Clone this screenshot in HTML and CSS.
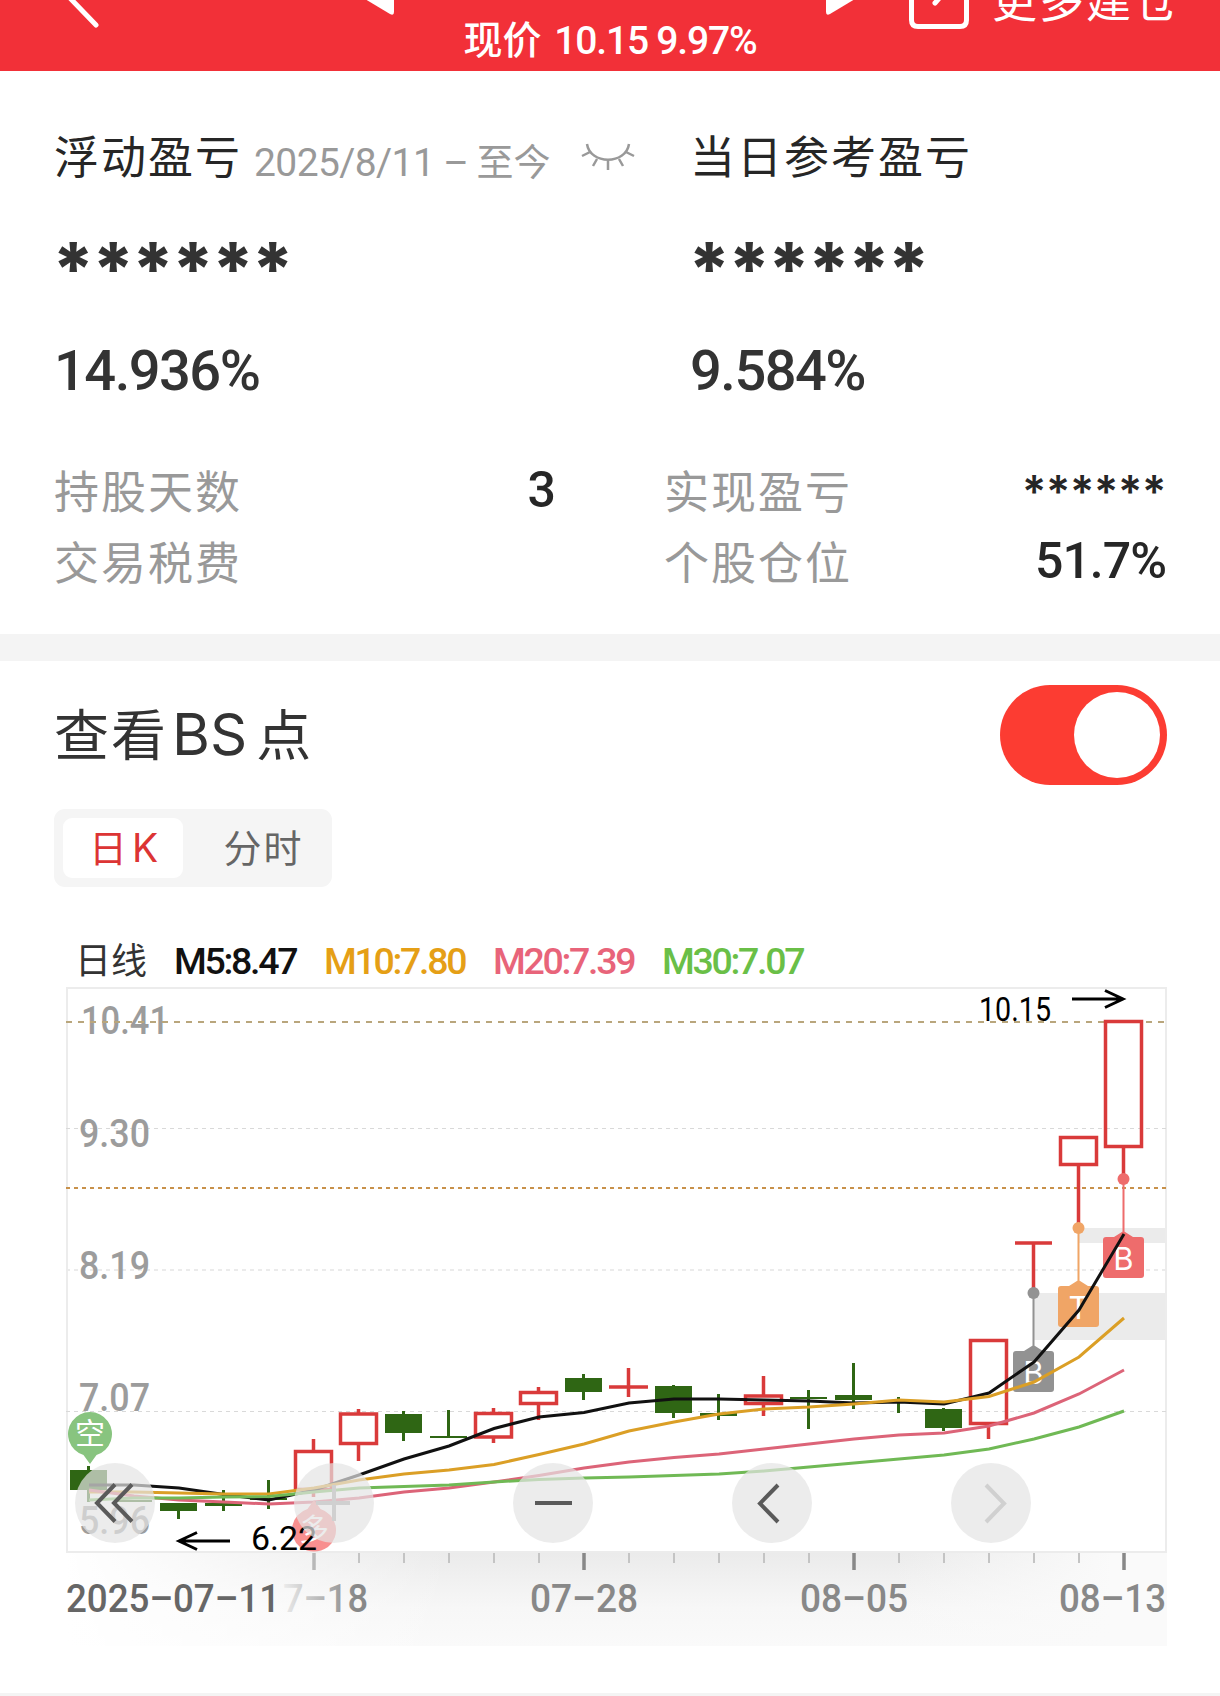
FILE: index.html
```html
<!DOCTYPE html>
<html lang="zh-CN">
<head>
  <meta charset="UTF-8">
  <meta name="viewport" content="width=device-width, initial-scale=1.0">
  <title>持仓详情</title>
  <link rel="stylesheet" href="styles.css">
</head>
<body>
  <header class="top-bar">
    <svg class="icon-back" width="50" height="32" viewBox="0 0 50 32">
      <path d="M16 -4L44 25" />
    </svg>
    <svg class="icon-prev" width="34" height="18" viewBox="0 0 34 18">
      <path d="M-2 -4H32V12Q32 16 28 14Z" />
    </svg>
    <p class="price">现价 <span class="num">10.15 9.97%</span></p>
    <svg class="icon-next" width="34" height="18" viewBox="0 0 34 18">
      <path d="M36 -4H2V12Q2 16 6 14Z" />
    </svg>
    <svg class="icon-more" width="62" height="32" viewBox="0 0 62 32">
      <path d="M3.500 -10V20Q3.500 26.500 10 26.500H52Q58.500 26.500 58.500 20V-10M34 -5L27 3" />
    </svg>
    <span class="more">更多建仓</span>
  </header>

  <section class="summary">
    <div class="profit">
      <div class="profit-col">
        <div class="profit-title">
          <span>浮动盈亏</span>
          <span class="period"><span class="num">2025/8/11 –</span> 至今</span>
          <svg class="icon-eye" width="54" height="28" viewBox="0 0 54 28">
            <path d="M6 1C9 22 45 22 48 1M9 9L1 13M45 9L53 13M16 16L12 23M38 16L42 23M27 17V27" />
          </svg>
        </div>
        <div class="stars">******</div>
        <div class="percent num">14.936%</div>
      </div>
      <div class="profit-col">
        <div class="profit-title"><span>当日参考盈亏</span></div>
        <div class="stars">******</div>
        <div class="percent num">9.584%</div>
      </div>
    </div>
    <div class="details">
      <div class="detail"><span>持股天数</span><b class="num">3</b></div>
      <div class="detail"><span>实现盈亏</span><b class="stars-small">******</b></div>
      <div class="detail"><span>交易税费</span></div>
      <div class="detail"><span>个股仓位</span><b class="num">51.7%</b></div>
    </div>
  </section>

  <section class="bs-panel">
    <div class="bs-header">
      <h2>查看<span class="latin">BS</span>点</h2>
      <span class="switch"><span class="knob"></span></span>
    </div>
    <div class="tabs">
      <span class="tab active">日<span class="latin">K</span></span>
      <span class="tab">分时</span>
    </div>

    <div class="legend">
      <span class="legend-name">日线</span>
      <span class="num m5">M5:8.47</span>
      <span class="num m10">M10:7.80</span>
      <span class="num m20">M20:7.39</span>
      <span class="num m30">M30:7.07</span>
    </div>

    <div class="chart">
      <svg width="1102" height="660" viewBox="66 987 1102 660">
        <defs>
          <linearGradient id="axis-v" x1="0" y1="0" x2="0" y2="1">
            <stop offset="0" stop-color="#ebebeb" />
            <stop offset="0.6" stop-color="#f7f7f7" />
            <stop offset="1" stop-color="#fafafa" />
          </linearGradient>
          <linearGradient id="axis-h" x1="0" y1="0" x2="1" y2="0">
            <stop offset="0" stop-color="#fff" />
            <stop offset="0.35" stop-color="#fff" stop-opacity="0" />
            <stop offset="0.75" stop-color="#fafafa" stop-opacity="0" />
            <stop offset="0.95" stop-color="#fafafa" />
          </linearGradient>
          <linearGradient id="date-fade" gradientUnits="userSpaceOnUse" x1="262" y1="0" x2="366" y2="0">
            <stop offset="0.15" stop-color="#f3f3f3" />
            <stop offset="0.9" stop-color="#888" />
          </linearGradient>
        </defs>

        <!-- time axis -->
        <rect x="66" y="1553" width="1101" height="93" fill="url(#axis-v)" />
        <rect x="66" y="1553" width="1101" height="93" fill="url(#axis-h)" />
        <path class="tick" d="M359 1553v10M404 1553v10M449 1553v10M494 1553v10M539 1553v10M629 1553v10M674 1553v10M719 1553v10M764 1553v10M809 1553v10M899 1553v10M944 1553v10M989 1553v10M1034 1553v10M1079 1553v10" />
        <path class="tick-major first" d="M314 1553v17" />
        <path class="tick-major" d="M584 1553v17M854 1553v17M1124 1553v17" />
        <text class="date" x="283" y="1612" textLength="85" lengthAdjust="spacingAndGlyphs" fill="url(#date-fade)">7–18</text>
        <text class="date start" x="66" y="1612" textLength="214" lengthAdjust="spacingAndGlyphs">2025–07–11</text>
        <text class="date" x="530" y="1612" textLength="108" lengthAdjust="spacingAndGlyphs">07–28</text>
        <text class="date" x="800" y="1612" textLength="108" lengthAdjust="spacingAndGlyphs">08–05</text>
        <text class="date" x="1059" y="1612" textLength="107" lengthAdjust="spacingAndGlyphs">08–13</text>

        <!-- gaps -->
        <path fill="#ebebeb" d="M1034 1293h133v47h-133zM1079 1228h88v15h-88z" />

        <!-- frame and grid -->
        <rect x="67" y="988" width="1099" height="564" fill="none" stroke="#ececec" stroke-width="2" />
        <path stroke="#d9d9d9" stroke-dasharray="4 4" d="M66 1128.500H1167M66 1411.500H1167" />
        <path stroke="#ebebeb" stroke-width="2" stroke-dasharray="4 4" d="M66 1270H1167" />
        <g class="scale">
          <text x="81" y="1034" textLength="88" lengthAdjust="spacingAndGlyphs">10.41</text>
          <text x="79" y="1147" textLength="71" lengthAdjust="spacingAndGlyphs">9.30</text>
          <text x="79" y="1279" textLength="71" lengthAdjust="spacingAndGlyphs">8.19</text>
          <text x="79" y="1411" textLength="71" lengthAdjust="spacingAndGlyphs">7.07</text>
          <text x="79" y="1534" textLength="71" lengthAdjust="spacingAndGlyphs">5.96</text>
        </g>
        <path stroke="#b9a67c" stroke-width="2" stroke-dasharray="6 6" d="M66 1022H1167" />
        <path stroke="#c8914a" stroke-width="2" stroke-dasharray="4 4" d="M66 1188H1167" />

        <!-- falling candles -->
        <path fill="#2f6614" d="M70 1470h37v20h-37zM115 1500h37v2h-37zM160 1503h37v8h-37zM205 1503h37v3h-37zM250 1498h37v2h-37zM385 1414h37v19h-37zM430 1436h37v2h-37zM565 1378h37v14h-37zM655 1386h37v27h-37zM700 1413h37v3h-37zM790 1397h37v2h-37zM835 1395h37v5h-37zM880 1401h37v2h-37zM925 1409h37v19h-37z" />
        <path stroke="#2f6614" stroke-width="3" d="M88.500 1466V1502M178.500 1503V1519M223.500 1490V1511M268.500 1480V1509M403.500 1411V1441M448.500 1410V1438M583.500 1374V1400M673.500 1385V1418M718.500 1394V1420M808.500 1390V1429M853.500 1363V1409M898.500 1397V1413M943.500 1408V1431" />

        <!-- rising candles -->
        <path class="rise" d="M295.500 1451.500h36v38h-36zM340.500 1414h36v29.500h-36zM475.500 1413.500h36v23.500h-36zM520.500 1392.500h36v11h-36zM745.500 1396h36v7.500h-36zM970.500 1340.500h36v83h-36zM1060.500 1137.500h36v27h-36zM1105.500 1021.500h36v125h-36z" />
        <path class="rise" d="M313.500 1439V1450M313.500 1491V1497M358.500 1409V1413M358.500 1445V1461M493.500 1408V1412M493.500 1438V1443M538.500 1387V1391M538.500 1405V1420M609 1387h39M628.500 1368V1397M763.500 1376V1395M763.500 1405V1416M988.500 1425V1439M1015 1243h37M1033.500 1243V1292M1078.500 1166V1228M1123.500 1148V1179" />

        <!-- trade points -->
        <g class="point hold">
          <circle cx="1033.500" cy="1293" r="6" />
          <path d="M1032.500 1293h2v53h-2zM1024 1351L1033.500 1345L1043 1351Z" />
          <rect x="1013" y="1351" width="41" height="41" rx="3" />
          <text x="1033.500" y="1384">B</text>
        </g>
        <g class="point trade">
          <circle cx="1078.500" cy="1228" r="6" />
          <path d="M1077.500 1228h2v53h-2zM1069 1286L1078.500 1280L1088 1286Z" />
          <rect x="1058" y="1286" width="41" height="41" rx="3" />
          <text x="1078.500" y="1319">T</text>
        </g>
        <g class="point buy">
          <circle cx="1123.500" cy="1179" r="6" />
          <path d="M1122.500 1179h2v53h-2zM1114 1237L1123.500 1231L1133 1237Z" />
          <rect x="1103" y="1237" width="41" height="41" rx="3" />
          <text x="1123.500" y="1270">B</text>
        </g>

        <!-- moving averages -->
        <g class="ma">
          <polyline stroke="#111" points="89,1485 134,1485 179,1488 224,1494.500 269,1500 314,1490 359,1475 404,1459 449,1446 494,1428.500 539,1417 584,1412.500 629,1403 674,1399 719,1399 764,1400 809,1401 854,1403 899,1402 944,1404 989,1393 1034,1362 1079,1310 1124,1234" />
          <polyline stroke="#db9f26" points="89,1492 134,1492 179,1493 224,1494 269,1494 314,1488 359,1480 404,1474 449,1470 494,1464.500 539,1454.500 584,1444 629,1431 674,1422 719,1414 764,1409 809,1407 854,1404 899,1400 944,1402 989,1396.500 1034,1382 1079,1357 1124,1318" />
          <polyline stroke="#dc6478" points="89,1490 134,1496 179,1500 224,1502 269,1504 314,1502 359,1498 404,1492 449,1488 494,1482 539,1475.500 584,1468 629,1462 674,1457.500 719,1454 764,1449 809,1444 854,1439 899,1435 944,1433 989,1426 1034,1413 1079,1394 1124,1370" />
          <polyline stroke="#70b955" points="89,1500 134,1498 179,1498 224,1497 269,1496.500 314,1492 359,1488 404,1486.500 449,1485 494,1482 539,1479.500 584,1478 629,1477 674,1475.500 719,1474 764,1471 809,1467 854,1463 899,1459 944,1455 989,1449 1034,1439 1079,1427 1124,1411" />
        </g>

        <!-- long / short balloons -->
        <g class="balloon">
          <path fill="#88c47f" d="M90 1464L83.500 1455A22 22 0 1 1 96.500 1455Z" />
          <text x="90" y="1444">空</text>
          <path fill="#f88f8f" d="M314 1500L307.500 1509A22 22 0 0 0 300 1547Q314 1556 328 1547A22 22 0 0 0 320.500 1509Z" />
          <text x="314" y="1540">多</text>
        </g>

        <!-- highest and lowest price -->
        <g class="extreme">
          <text x="979" y="1021" textLength="72" lengthAdjust="spacingAndGlyphs">10.15</text>
          <path d="M1072 999h51M1105 990.500L1123 999L1105 1007.500" />
          <text x="251" y="1550" textLength="66" lengthAdjust="spacingAndGlyphs">6.22</text>
          <path d="M230 1541h-51M197 1532.500L179 1541L197 1549.500" />
        </g>
      </svg>

      <div class="controls">
        <button type="button" class="control">
          <svg width="80" height="80"><path d="M80 21.500L62 40L80 58.500M97 21.500L79 40L97 58.500" transform="translate(-40)" /></svg>
        </button>
        <button type="button" class="control disabled">
          <svg width="80" height="80"><path d="M22 40H56M40 22V58" /></svg>
        </button>
        <button type="button" class="control">
          <svg width="80" height="80"><path d="M22 40H59" /></svg>
        </button>
        <button type="button" class="control">
          <svg width="80" height="80"><path d="M46 22L28 40.500L46 59" /></svg>
        </button>
        <button type="button" class="control disabled">
          <svg width="80" height="80"><path d="M35 22L53 40.500L35 59" /></svg>
        </button>
      </div>
    </div>
  </section>
</body>
</html>
```

FILE: styles.css
```css
* {
  box-sizing: border-box;
}

body {
  margin: 0;
  width: 1220px;
  height: 1696px;
  overflow: hidden;
  background-color: #fff;
  color: #262626;
  font-family: "Noto Sans CJK SC", sans-serif;
}

.num {
  font-family: Roboto, "Noto Sans CJK SC", sans-serif;
  font-weight: 500;
}

/* top bar */
.top-bar {
  display: flex;
  align-items: flex-start;
  height: 71px;
  background-color: #f23038;
  color: #fff;
}

.top-bar svg {
  flex: none;
}

.icon-back {
  margin-left: 52px;
}

.icon-back path,
.icon-more path {
  fill: none;
  stroke: #fff;
  stroke-width: 5;
  stroke-linecap: round;
}

.icon-prev {
  margin-left: 260px;
}

.icon-prev path,
.icon-next path {
  fill: #fff;
}

.price {
  width: 430px;
  margin: 12px 0 0 -1px;
  font-size: 39px;
  font-weight: 500;
  line-height: 50px;
  text-align: center;
  white-space: nowrap;
}

.price .num {
  margin-left: 4px;
  letter-spacing: -1.2px;
}

.icon-next {
  margin-left: -1px;
}

.icon-more {
  margin-left: 50px;
}

.more {
  margin: -26px 0 0 22px;
  font-size: 45px;
  line-height: 50px;
  letter-spacing: 2px;
  white-space: nowrap;
}

/* profit summary */
.summary {
  height: 590px;
  padding: 48px 54px 0;
  border-bottom: 27px solid #f4f4f4;
}

.profit {
  display: grid;
  grid-template-columns: 636px 1fr;
}

.profit-title {
  display: flex;
  align-items: center;
  height: 70px;
  font-size: 45px;
  letter-spacing: 2px;
  white-space: nowrap;
}

.period {
  margin: 12px 0 0 12px;
  color: #999;
  font-size: 37px;
  letter-spacing: 0;
}

.period .num {
  font-size: 39px;
  font-weight: 400;
  letter-spacing: -0.6px;
}

.icon-eye {
  margin: 5px 0 0 30px;
}

.icon-eye path {
  fill: none;
  stroke: #999;
  stroke-width: 2.5;
}

.stars {
  height: 130px;
  margin-left: -2px;
  padding-top: 40px;
  color: #333;
  font-family: Inter, sans-serif;
  font-size: 73px;
  font-weight: 800;
  line-height: 80px;
  letter-spacing: -2.6px;
}

.percent {
  height: 100px;
  margin-top: 2px;
  color: #333;
  font-size: 56px;
  line-height: 100px;
  letter-spacing: -1.5px;
}

.details {
  display: grid;
  grid-template-columns: 501px 502px;
  column-gap: 109px;
  grid-auto-rows: 71px;
  margin-top: 33px;
}

.detail {
  display: flex;
  justify-content: space-between;
  align-items: center;
  color: #999;
  font-size: 45px;
  letter-spacing: 2px;
}

.detail b {
  color: #262626;
  font-size: 50px;
  letter-spacing: -1px;
}

.detail .stars-small {
  padding-top: 3px;
  font-family: Inter, sans-serif;
  font-size: 45px;
  font-weight: 600;
  letter-spacing: -0.3px;
}

/* BS points */
.bs-header {
  display: flex;
  justify-content: space-between;
  align-items: center;
  height: 148px;
  padding: 0 53px 0 54px;
}

.bs-header h2 {
  margin: -8px 0 0;
  color: #333;
  font-size: 55px;
  font-weight: 400;
  letter-spacing: 2px;
}

.bs-header .latin {
  margin: 0 9px 0 4px;
  font-family: Inter, sans-serif;
  font-size: 58px;
  letter-spacing: 0;
}

.switch {
  display: flex;
  justify-content: flex-end;
  width: 167px;
  height: 100px;
  padding: 7px;
  border-radius: 50px;
  background-color: #fc3c32;
}

.knob {
  width: 86px;
  height: 86px;
  border-radius: 50%;
  background-color: #fff;
}

.tabs {
  display: flex;
  width: 278px;
  height: 78px;
  margin-left: 54px;
  padding: 9px;
  border-radius: 11px;
  background-color: #f5f5f5;
}

.tab {
  width: 120px;
  border-radius: 9px;
  color: #666;
  font-size: 38px;
  line-height: 56px;
  letter-spacing: 2px;
  text-align: center;
}

.tab + .tab {
  width: 140px;
  padding-left: 21px;
}

.tab.active {
  padding-left: 3px;
  background-color: #fff;
  color: #dc3434;
}

.tab .latin {
  margin-left: 3px;
  font-family: Inter, sans-serif;
  font-size: 39px;
}

.legend {
  display: flex;
  align-items: center;
  height: 50px;
  margin: 49px 0 1px 75px;
  font-size: 37.5px;
  white-space: nowrap;
}

.legend-name {
  width: 99px;
  margin-top: -6px;
  font-size: 36px;
  color: #333;
}

.legend .num {
  width: 169px;
  letter-spacing: -2.3px;
}

.legend .m5 {
  width: 150px;
  color: #111;
}

.m10 {
  color: #e59f16;
}

.m20 {
  color: #e8647a;
}

.m30 {
  color: #6abf47;
}

/* chart */
.chart {
  position: relative;
  height: 709px;
  padding-left: 66px;
  border-bottom: 3px solid #f4f4f4;
}

.chart > svg {
  display: block;
}

.tick {
  stroke: #c4c4c4;
  stroke-width: 2;
}

.tick-major {
  stroke: #888;
  stroke-width: 3.5;
}

.tick-major.first {
  stroke: #b8b8b8;
}

.date,
.scale text {
  font-family: Roboto, sans-serif;
  font-size: 39px;
  font-weight: 500;
}

.date {
  fill: #888;
}

.date[fill] {
  fill: url(#date-fade);
}

.date.start {
  fill: #666;
}

.scale text {
  fill: #9c9c9c;
}

.rise {
  fill: none;
  stroke: #d93a3a;
  stroke-width: 3.5;
}

.point text {
  fill: #fff;
  font-family: Inter, sans-serif;
  font-size: 31px;
  text-anchor: middle;
}

.hold {
  fill: #929292;
}

.trade {
  fill: #f0a566;
}

.buy {
  fill: #ee6c6c;
}

.ma polyline {
  fill: none;
  stroke-width: 3;
}

.balloon text {
  fill: #fff;
  font-family: "Noto Sans CJK SC", sans-serif;
  font-size: 30px;
  text-anchor: middle;
}

.extreme text {
  font-family: Roboto, sans-serif;
  font-size: 34px;
}

.extreme path {
  fill: none;
  stroke: #000;
  stroke-width: 3;
}

.controls {
  position: absolute;
  left: 75px;
  top: 476px;
  display: flex;
  gap: 139px;
}

.control {
  width: 80px;
  height: 80px;
  padding: 0;
  border: none;
  border-radius: 50%;
  background-color: rgba(228, 228, 228, 0.7);
}

.control svg {
  display: block;
}

.control path {
  fill: none;
  stroke: #5a5a5a;
  stroke-width: 4;
}

.control.disabled path {
  stroke: #d0d0d0;
}
```
